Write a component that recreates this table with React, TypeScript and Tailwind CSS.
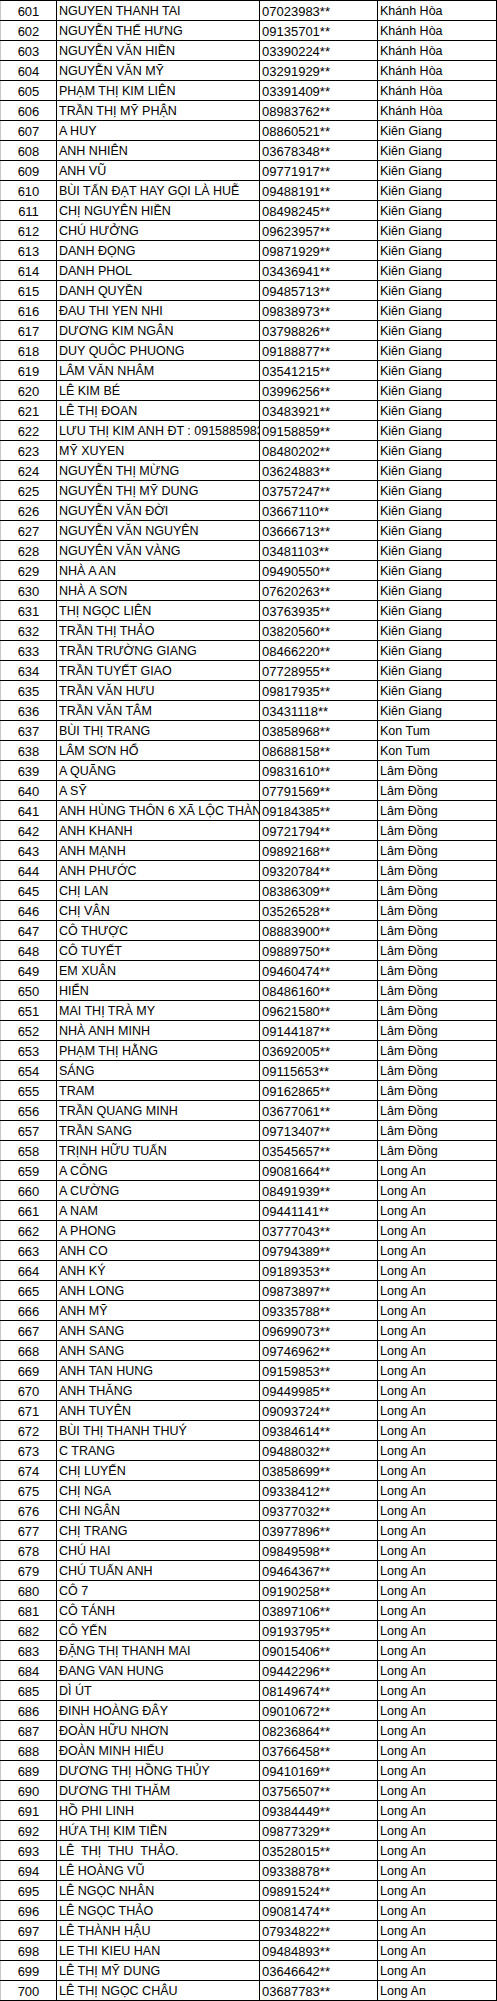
import React from "react";

type Row = [string, string];

const groups: { province: string; start: number; rows: Row[] }[] = [
  {
    province: "Khánh Hòa",
    start: 601,
    rows: [
      ["NGUYEN THANH TAI", "07023983"],
      ["NGUYỄN THẾ HƯNG", "09135701"],
      ["NGUYỄN VĂN HIỀN", "03390224"],
      ["NGUYỄN VĂN MỸ", "03291929"],
      ["PHẠM THỊ KIM LIÊN", "03391409"],
      ["TRẦN THỊ MỸ PHẬN", "08983762"],
    ],
  },
  {
    province: "Kiên Giang",
    start: 607,
    rows: [
      ["A HUY", "08860521"],
      ["ANH NHIÊN", "03678348"],
      ["ANH VŨ", "09771917"],
      ["BÙI TẤN ĐẠT HAY GỌI LÀ HUỄ", "09488191"],
      ["CHỊ NGUYÊN HIỀN", "08498245"],
      ["CHÚ HƯỞNG", "09623957"],
      ["DANH ĐỌNG", "09871929"],
      ["DANH PHOL", "03436941"],
      ["DANH QUYỀN", "09485713"],
      ["ĐAU THI YEN NHI", "09838973"],
      ["DƯƠNG KIM NGÂN", "03798826"],
      ["DUY QUÔC PHUONG", "09188877"],
      ["LÂM VĂN NHÂM", "03541215"],
      ["LÊ KIM BÉ", "03996256"],
      ["LÊ THỊ ĐOAN", "03483921"],
      ["LƯU THỊ KIM ANH ĐT : 0915885983", "09158859"],
      ["MỸ XUYEN", "08480202"],
      ["NGUYỄN THỊ MỪNG", "03624883"],
      ["NGUYỄN THỊ MỸ DUNG", "03757247"],
      ["NGUYỄN VĂN ĐỜI", "03667110"],
      ["NGUYỄN VĂN NGUYÊN", "03666713"],
      ["NGUYÊN VĂN VÀNG", "03481103"],
      ["NHÀ A AN", "09490550"],
      ["NHÀ A SƠN", "07620263"],
      ["THỊ NGỌC LIÊN", "03763935"],
      ["TRẦN THỊ THẢO", "03820560"],
      ["TRẦN TRƯỜNG GIANG", "08466220"],
      ["TRẦN TUYẾT GIAO", "07728955"],
      ["TRẦN VĂN HƯU", "09817935"],
      ["TRẦN VĂN TÂM", "03431118"],
    ],
  },
  {
    province: "Kon Tum",
    start: 637,
    rows: [
      ["BÙI THỊ TRANG", "03858968"],
      ["LÂM SƠN HỔ", "08688158"],
    ],
  },
  {
    province: "Lâm Đồng",
    start: 639,
    rows: [
      ["A QUÃNG", "09831610"],
      ["A SỸ", "07791569"],
      ["ANH HÙNG THÔN 6 XÃ LỘC THÀNH", "09184385"],
      ["ANH KHANH", "09721794"],
      ["ANH MẠNH", "09892168"],
      ["ANH PHƯỚC", "09320784"],
      ["CHỊ LAN", "08386309"],
      ["CHỊ VÂN", "03526528"],
      ["CÔ THƯỢC", "08883900"],
      ["CÔ TUYẾT", "09889750"],
      ["EM XUÂN", "09460474"],
      ["HIỂN", "08486160"],
      ["MAI THỊ TRÀ MY", "09621580"],
      ["NHÀ ANH MINH", "09144187"],
      ["PHẠM THỊ HẰNG", "03692005"],
      ["SÁNG", "09115653"],
      ["TRAM", "09162865"],
      ["TRẦN QUANG MINH", "03677061"],
      ["TRẦN SANG", "09713407"],
      ["TRỊNH HỮU TUẤN", "03545657"],
    ],
  },
  {
    province: "Long An",
    start: 659,
    rows: [
      ["A CÔNG", "09081664"],
      ["A CƯỜNG", "08491939"],
      ["A NAM", "09441141"],
      ["A PHONG", "03777043"],
      ["ANH CO", "09794389"],
      ["ANH KÝ", "09189353"],
      ["ANH LONG", "09873897"],
      ["ANH MỸ", "09335788"],
      ["ANH SANG", "09699073"],
      ["ANH SANG", "09746962"],
      ["ANH TAN HUNG", "09159853"],
      ["ANH THĂNG", "09449985"],
      ["ANH TUYÊN", "09093724"],
      ["BÙI THỊ THANH THUÝ", "09384614"],
      ["C TRANG", "09488032"],
      ["CHỊ LUYẾN", "03858699"],
      ["CHỊ NGA", "09338412"],
      ["CHI NGÂN", "09377032"],
      ["CHỊ TRANG", "03977896"],
      ["CHÚ HAI", "09849598"],
      ["CHÚ TUẤN ANH", "09464367"],
      ["CÔ 7", "09190258"],
      ["CÔ TÁNH", "03897106"],
      ["CÔ YẾN", "09193795"],
      ["ĐẶNG THỊ THANH MAI", "09015406"],
      ["ĐANG VAN HUNG", "09442296"],
      ["DÌ ÚT", "08149674"],
      ["ĐINH HOÀNG ĐÂY", "09010672"],
      ["ĐOÀN HỮU NHƠN", "08236864"],
      ["ĐOÀN MINH HIẾU", "03766458"],
      ["DƯƠNG THỊ HỒNG THỦY", "09410169"],
      ["DƯƠNG THI THĂM", "03756507"],
      ["HỒ PHI LINH", "09384449"],
      ["HỨA THỊ KIM TIỀN", "09877329"],
      ["LÊ  THỊ  THU  THẢO.", "03528015"],
      ["LÊ HOÀNG VŨ", "09338878"],
      ["LÊ NGỌC NHÂN", "09891524"],
      ["LÊ NGỌC THẢO", "09081474"],
      ["LÊ THÀNH HẬU", "07934822"],
      ["LE THI KIEU HAN", "09484893"],
      ["LÊ THỊ MỸ DUNG", "03646642"],
      ["LÊ THỊ NGỌC CHÂU", "03687783"],
    ],
  },
];

const rows: { no: number; name: string; phone: string; province: string }[] = [];
groups.forEach((g) => {
  g.rows.forEach((r, i) => {
    rows.push({ no: g.start + i, name: r[0], phone: r[1], province: g.province });
  });
});

export default function App() {
  return (
    <div
      className="w-[497px] bg-white text-black border-t border-black"
      style={{ fontFamily: '"Liberation Sans", Arial, sans-serif' }}
    >
      {rows.map((r) => (
        <div
          key={r.no}
          className="grid grid-cols-[56px_203px_118px_1fr] h-[20px] border-b border-black"
        >
          <div className="h-[19px] overflow-hidden border-l border-[#c6c6c6] text-center text-[13px] leading-[19px] pt-px">
            {r.no}
          </div>
          <div className="h-[19px] overflow-hidden whitespace-pre border-l border-black pl-[2px] text-[12.5px] leading-[19px] pt-px">
            {r.name}
          </div>
          <div className="h-[19px] overflow-hidden whitespace-nowrap border-l border-black pl-[2px] text-[13px] leading-[19px] pt-px">
            {r.phone}**
          </div>
          <div className="h-[19px] overflow-hidden whitespace-nowrap border-l border-r border-black pl-[2px] text-[12.5px] leading-[19px] pt-px">
            {r.province}
          </div>
        </div>
      ))}
    </div>
  );
}
